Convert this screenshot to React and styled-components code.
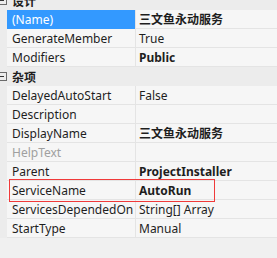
import styled, { createGlobalStyle } from "styled-components"

const Global = createGlobalStyle`
  body {
    margin: 0;
    background: #f0f0f0;
    font-family: "Noto Sans", "Noto Sans CJK SC", sans-serif;
  }
`

const Frame = styled.div`
  width: 277px;
  height: 258px;
  overflow: hidden;
  background: #f0f0f0;
`

const List = styled.div`
  margin-top: -9px;
  display: flex;
  flex-direction: column;
`

const Category = styled.div`
  height: 19px;
  display: flex;
  align-items: center;
  gap: 5px;
  background: #ececec;
  font-size: 12px;
  font-weight: 700;
  color: #1e1e1e;
`

const Toggle = styled.span`
  width: 7px;
  height: 9px;
  box-sizing: border-box;
  border: 1px solid #6b6b6b;
  border-left: none;
  position: relative;
  &::after {
    content: "";
    position: absolute;
    left: 0;
    top: 3px;
    width: 4px;
    height: 1px;
    background: #333;
  }
`

const Row = styled.div`
  position: relative;
  height: 19px;
  display: grid;
  grid-template-columns: 7px 128px 1px 1fr;
  background: #ececec;
  font-size: 12px;
  color: #1e1e1e;
`

// red annotation frame drawn over the row
const Mark = styled.span`
  position: absolute;
  z-index: 2;
  left: 9px;
  width: 206px;
  top: -2px;
  bottom: -2px;
  box-sizing: border-box;
  border: 1px solid #f03a3a;
  pointer-events: none;
`

const Name = styled.div`
  display: flex;
  align-items: center;
  padding-left: 5px;
  white-space: nowrap;
  overflow: hidden;
  background: ${p => (p.$selected ? "#3399ff" : "#f6f6f6")};
  color: ${p => (p.$selected ? "#fff" : p.$disabled ? "#a0a0a0" : "#1e1e1e")};
  border-bottom: 1px solid ${p => (p.$selected ? "#3399ff" : "#e4e4e4")};
`

const Divider = styled.div`
  background: #e4e4e4;
`

const Value = styled.div`
  display: flex;
  align-items: center;
  padding-left: 3px;
  white-space: nowrap;
  overflow: hidden;
  background: #f6f6f6;
  border-bottom: 1px solid #e4e4e4;
  font-weight: ${p => (p.$bold ? 700 : 400)};
`

const groups = [
  {
    title: "设计",
    rows: [
      { name: "(Name)", value: "三文鱼永动服务", bold: true, selected: true },
      { name: "GenerateMember", value: "True" },
      { name: "Modifiers", value: "Public", bold: true },
    ],
  },
  {
    title: "杂项",
    rows: [
      { name: "DelayedAutoStart", value: "False" },
      { name: "Description", value: "" },
      { name: "DisplayName", value: "三文鱼永动服务", bold: true },
      { name: "HelpText", value: "", disabled: true },
      { name: "Parent", value: "ProjectInstaller", bold: true },
      { name: "ServiceName", value: "AutoRun", bold: true, marked: true },
      { name: "ServicesDependedOn", value: "String[] Array" },
      { name: "StartType", value: "Manual" },
    ],
  },
]

export default function App() {
  return (
    <>
      <Global />
      <Frame>
        <List>
          {groups.map(g => (
            <div key={g.title}>
              <Category>
                <Toggle />
                {g.title}
              </Category>
              {g.rows.map(r => (
                <Row key={r.name}>
                  <span />
                  <Name $selected={r.selected} $disabled={r.disabled}>{r.name}</Name>
                  <Divider />
                  <Value $bold={r.bold}>{r.value}</Value>
                  {r.marked && <Mark />}
                </Row>
              ))}
            </div>
          ))}
        </List>
      </Frame>
    </>
  )
}
